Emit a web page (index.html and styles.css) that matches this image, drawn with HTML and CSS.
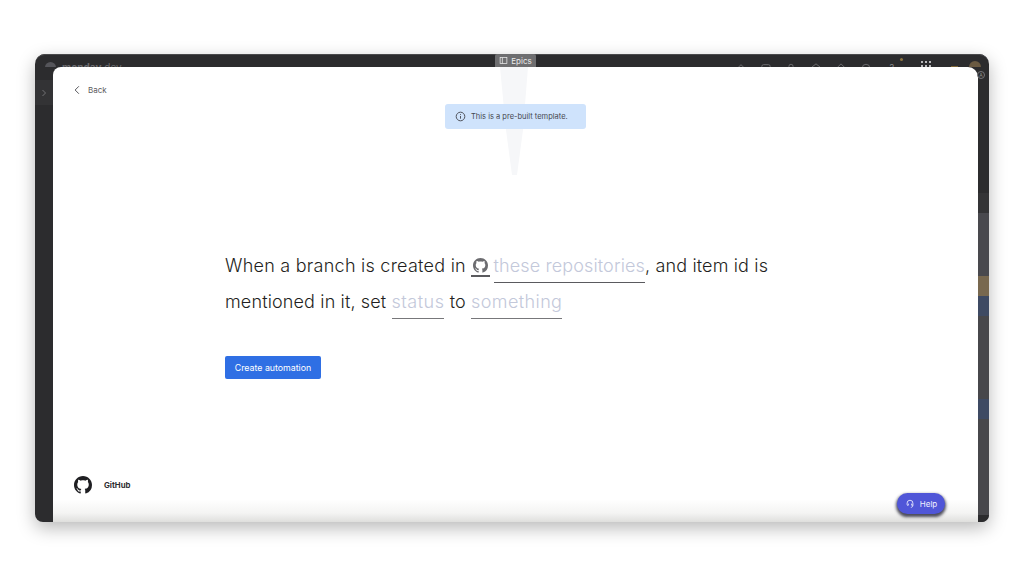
FILE: index.html
```html
<!DOCTYPE html>
<html lang="en">
<head>
    <meta charset="UTF-8">
    <meta name="viewport" content="width=device-width, initial-scale=1.0">
    <title>GitHub automation template</title>
    <link rel="stylesheet" href="styles.css">
</head>
<body>

<div class="window">
    <div class="topbar">
        <span class="brand"><span class="brand-dot"></span>monday<span class="brand-light">.dev</span></span>
        <div class="top-icons">
            <svg viewBox="0 0 12 12"><path d="M2 6l4-4 4 4v5H2z"/></svg>
            <svg viewBox="0 0 12 12"><rect x="1" y="2" width="10" height="8" rx="2"/></svg>
            <svg viewBox="0 0 12 12"><circle cx="6" cy="4" r="2.5"/><path d="M2 11c0-3 8-3 8 0"/></svg>
            <svg viewBox="0 0 12 12"><path d="M6 1l5 4-2 6H3L1 5z"/></svg>
            <svg viewBox="0 0 12 12"><path d="M6 1l5 5-5 5-5-5z"/></svg>
            <svg viewBox="0 0 12 12"><circle cx="6" cy="6" r="4.5"/></svg>
            <span class="top-question">?<i class="notify-dot"></i></span>
            <span class="apps-grid"><i></i><i></i><i></i><i></i><i></i><i></i></span>
        </div>
        <span class="top-mark"></span>
        <span class="top-avatar"></span>
    </div>

    <div class="window-body">
        <div class="left-rail">
            <div class="rail-head">
                <svg viewBox="0 0 8 10"><path d="M2 1l4 4-4 4"/></svg>
            </div>
        </div>

        <div class="modal">
            <a class="back-link">
                <svg viewBox="0 0 8 12"><path d="M6.5 1L1.5 6l5 5"/></svg>
                Back
            </a>

            <div class="banner-row">
                <div class="banner">
                    <svg viewBox="0 0 12 12"><circle cx="6" cy="6" r="4.7"/><path d="M6 5.4v3M6 3.4v.9"/></svg>
                    This is a pre-built template.
                </div>
            </div>

            <div class="sentence">
                <p class="line-one">When a branch is created in <span class="slot slot-icon"><svg class="gh-small" viewBox="0 0 16 16"><path d="M8 0C3.58 0 0 3.58 0 8c0 3.54 2.29 6.53 5.47 7.59.4.07.55-.17.55-.38 0-.19-.01-.82-.01-1.49-2.01.37-2.53-.49-2.69-.94-.09-.23-.48-.94-.82-1.13-.28-.15-.68-.52-.01-.53.63-.01 1.08.58 1.23.82.72 1.21 1.87.87 2.33.66.07-.52.28-.87.51-1.07-1.78-.2-3.64-.89-3.64-3.95 0-.87.31-1.59.82-2.15-.08-.2-.36-1.02.08-2.12 0 0 .67-.21 2.2.82.64-.18 1.32-.27 2-.27s1.36.09 2 .27c1.53-1.04 2.2-.82 2.2-.82.44 1.1.16 1.92.08 2.12.51.56.82 1.27.82 2.15 0 3.07-1.87 3.75-3.65 3.95.29.25.54.73.54 1.48 0 1.07-.01 1.93-.01 2.2 0 .21.15.46.55.38A8.01 8.01 0 0 0 16 8c0-4.42-3.58-8-8-8z"/></svg></span> <span class="slot slot-tight">these repositories</span><span class="line-end">, and item id is</span></p>
                <p>mentioned in it, set <span class="slot slot-status">status</span> to <span class="slot slot-loose">something</span></p>
            </div>

            <button class="create-btn">Create automation</button>

            <div class="app-footer">
                <svg class="gh-large" viewBox="0 0 16 16"><path d="M8 0C3.58 0 0 3.58 0 8c0 3.54 2.29 6.53 5.47 7.59.4.07.55-.17.55-.38 0-.19-.01-.82-.01-1.49-2.01.37-2.53-.49-2.69-.94-.09-.23-.48-.94-.82-1.13-.28-.15-.68-.52-.01-.53.63-.01 1.08.58 1.23.82.72 1.21 1.87.87 2.33.66.07-.52.28-.87.51-1.07-1.78-.2-3.64-.89-3.64-3.95 0-.87.31-1.59.82-2.15-.08-.2-.36-1.02.08-2.12 0 0 .67-.21 2.2.82.64-.18 1.32-.27 2-.27s1.36.09 2 .27c1.53-1.04 2.2-.82 2.2-.82.44 1.1.16 1.92.08 2.12.51.56.82 1.27.82 2.15 0 3.07-1.87 3.75-3.65 3.95.29.25.54.73.54 1.48 0 1.07-.01 1.93-.01 2.2 0 .21.15.46.55.38A8.01 8.01 0 0 0 16 8c0-4.42-3.58-8-8-8z"/></svg>
                <span class="app-name">GitHub</span>
            </div>

            <!-- faint shape showing through behind the banner -->
            <svg class="ghost" viewBox="0 0 28 108"><path d="M0 0h28l-5 63-6 45h-5l-6-45z"/></svg>

            <button class="help-btn">
                <svg viewBox="0 0 12 12"><path d="M2.5 7V5a3.5 3.5 0 0 1 7 0v2.5H8V5.5M2.5 7.5H4V5.5M9.5 7.5c0 1.6-1 2.5-2.5 2.5"/></svg>
                Help
            </button>
        </div>

        <div class="right-rail">
            <div class="band band-dark"></div>
            <div class="band band-mid"></div>
            <div class="band band-grey"></div>
            <div class="band band-tan"></div>
            <div class="band band-blue"></div>
            <div class="band band-grey-2"></div>
            <div class="band band-blue"></div>
            <div class="band band-grey-3"></div>
            <div class="band band-foot"></div>
        </div>
    </div>

    <span class="rail-badge">A</span>

    <div class="epics-tab">
        <svg viewBox="0 0 12 12"><rect x="1.5" y="2" width="9" height="8"/><path d="M4.5 2v8"/></svg>
        Epics
    </div>
</div>

</body>
</html>
```

FILE: styles.css
```css
* {
    box-sizing: border-box;
}

body {
    margin: 0;
    height: 576px;
    padding: 54px 35px 54px 35px;
    background-color: #ffffff;
    font-family: 'Inter', 'Liberation Sans', sans-serif;
    overflow: hidden;
}

.window {
    position: relative;
    height: 468px;
    display: flex;
    flex-direction: column;
    background-color: #2c2c2e;
    border-radius: 10px 10px 8px 8px;
    box-shadow: 0 6px 18px rgba(0, 0, 0, 0.28);
}

.topbar {
    height: 13px;
    flex-shrink: 0;
    display: flex;
    align-items: flex-start;
    padding: 6px 8px 0 10px;
    overflow: hidden;
    border-top: 1px solid #4a4a4c;
    border-radius: 10px 10px 0 0;
    color: #8a8a8c;
}

.brand {
    display: flex;
    align-items: center;
    gap: 6px;
    font-size: 10px;
    font-weight: 700;
    line-height: 12px;
    color: #6c6c70;
}

.brand-dot {
    width: 11px;
    height: 11px;
    border-radius: 50%;
    background-color: #55555a;
}

.brand-light {
    font-weight: 400;
    margin-left: -6px;
}

.top-icons {
    margin-left: auto;
    display: flex;
    align-items: flex-start;
    gap: 15px;
    padding-top: 2px;
}

.top-icons svg {
    width: 10px;
    height: 10px;
    fill: none;
    stroke: #77777a;
    stroke-width: 1;
}

.top-question {
    position: relative;
    margin-left: 3px;
    font-size: 9px;
    line-height: 10px;
}

.notify-dot {
    position: absolute;
    left: 11px;
    top: -5px;
    width: 3px;
    height: 3px;
    border-radius: 50%;
    background-color: #8d7440;
}

.apps-grid {
    display: grid;
    grid-template-columns: repeat(3, 2px);
    gap: 2px;
    margin-top: -2px;
    margin-left: 12px;
}

.apps-grid i {
    width: 2px;
    height: 2px;
    background-color: #b9b9bb;
}

.top-mark {
    width: 7px;
    height: 5px;
    margin: 5px 0 0 20px;
    background-color: #7c6334;
}

.top-avatar {
    width: 12px;
    height: 12px;
    margin: 0 0 0 11px;
    border-radius: 50%;
    background-color: #6a5a42;
}

.window-body {
    flex: 1;
    min-height: 0;
    display: flex;
}

.left-rail {
    width: 18px;
    flex-shrink: 0;
    padding-top: 13px;
}

.rail-head {
    height: 25px;
    display: flex;
    align-items: center;
    justify-content: center;
    background-color: #333335;
}

.rail-head svg {
    width: 6px;
    height: 8px;
    fill: none;
    stroke: #77777a;
    stroke-width: 1.2;
}

.modal {
    position: relative;
    flex: 1;
    min-width: 0;
    display: flex;
    flex-direction: column;
    background: linear-gradient(to bottom, #ffffff 95%, #f4f4f3 98%, #dfdfdd 100%);
    border-radius: 8px 10px 0 0;
}

.back-link {
    display: flex;
    align-items: center;
    gap: 8px;
    margin: 17px 0 0 21px;
    height: 12px;
    font-size: 8px;
    color: #5c5c60;
}

.back-link svg {
    width: 6px;
    height: 10px;
    fill: none;
    stroke: #55555a;
    stroke-width: 1.3;
}

.banner-row {
    display: flex;
    justify-content: center;
    margin-top: 8px;
}

.banner {
    position: relative;
    z-index: 1;
    width: 141px;
    height: 25px;
    display: flex;
    align-items: center;
    gap: 5px;
    padding-left: 10px;
    background-color: #cfe3fc;
    border-radius: 3px;
    font-size: 7.5px;
    color: #45474f;
}

.banner svg {
    width: 11px;
    height: 11px;
    fill: none;
    stroke: #45474f;
    stroke-width: 1;
}

.sentence {
    margin: 119px 0 0 172px;
    font-size: 18px;
    font-weight: 300;
    letter-spacing: 0.14px;
    line-height: 36px;
    color: #1f1f22;
}

.sentence p {
    margin: 0;
}

.line-one {
    letter-spacing: 0.25px;
}

.line-end {
    letter-spacing: 0.15px;
}

.slot {
    padding-bottom: 6px;
    border-bottom: 1.5px solid #77777a;
    color: #c3c8da;
}

.slot-tight {
    margin-left: -2px;
    letter-spacing: 0.12px;
    border-bottom-color: #5a5a5e;
}

.slot-status {
    letter-spacing: 0.5px;
}

.slot-loose {
    letter-spacing: 0.4px;
}

.slot-icon {
    display: inline-block;
    width: 19px;
    height: 23px;
    padding: 0;
    line-height: 0;
    text-align: center;
    vertical-align: top;
    margin-top: 6px;
    border-bottom: 2px solid #5a5a5e;
}

.gh-small {
    width: 15px;
    height: 15px;
    margin-top: 4px;
    fill: #6c6c70;
}

.create-btn {
    align-self: flex-start;
    width: 96px;
    height: 23px;
    margin: 36px 0 0 172px;
    padding: 0;
    border: none;
    border-radius: 2px;
    background-color: #2f6fe4;
    color: #ffffff;
    font-family: inherit;
    font-size: 8.8px;
}

.app-footer {
    display: flex;
    align-items: center;
    gap: 12px;
    margin: 97px 0 0 21px;
}

.gh-large {
    width: 18px;
    height: 18px;
    fill: #1f1f22;
}

.app-name {
    font-size: 7.8px;
    font-weight: 700;
    color: #2d2d30;
}

.ghost {
    position: absolute;
    left: 447px;
    top: 0;
    width: 28px;
    height: 108px;
    fill: #f6f7f9;
}

.help-btn {
    position: absolute;
    right: 33px;
    bottom: 8px;
    width: 48px;
    height: 21px;
    display: flex;
    align-items: center;
    justify-content: center;
    gap: 5px;
    padding: 0;
    border: none;
    border-radius: 11px;
    background-color: #5056d8;
    box-shadow: 0 2px 3px 1px rgba(20, 20, 40, 0.75);
    color: #f0f0ff;
    font-family: inherit;
    font-size: 8px;
}

.help-btn svg {
    width: 10px;
    height: 10px;
    fill: none;
    stroke: #f0f0ff;
    stroke-width: 1;
}

.right-rail {
    width: 11px;
    flex-shrink: 0;
    display: flex;
    flex-direction: column;
}

.band-dark {
    height: 126px;
}

.band-mid {
    height: 20px;
    background-color: #343436;
}

.band-grey {
    height: 63px;
    background-color: #49494e;
}

.band-tan {
    height: 20px;
    background-color: #78684f;
}

.band-blue {
    height: 20px;
    background-color: #3e4a63;
}

.band-grey-2 {
    height: 83px;
    background-color: #47474b;
}

.band-grey-3 {
    flex: 1;
    background-color: #47474b;
}

.band-foot {
    height: 7px;
    background-color: #2c2c2e;
    border-radius: 0 0 8px 0;
}

.rail-badge {
    position: absolute;
    right: 4px;
    top: 17px;
    width: 8px;
    height: 8px;
    display: flex;
    align-items: center;
    justify-content: center;
    border: 1px solid #77777a;
    border-radius: 50%;
    font-size: 5px;
    color: #8a8a8c;
}

.epics-tab {
    position: absolute;
    left: 460px;
    top: 0;
    width: 41px;
    height: 13px;
    display: flex;
    align-items: center;
    justify-content: center;
    gap: 3px;
    background-color: #6e6e70;
    border-radius: 2px 2px 0 0;
    font-size: 8px;
    color: #ebebeb;
}

.epics-tab svg {
    width: 9px;
    height: 9px;
    fill: none;
    stroke: #ebebeb;
    stroke-width: 1;
}
```
